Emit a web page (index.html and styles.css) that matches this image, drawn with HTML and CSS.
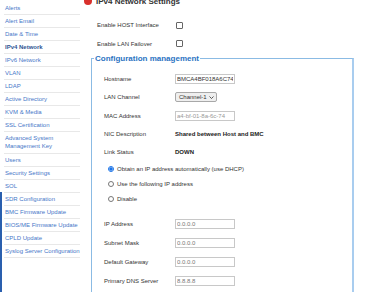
FILE: index.html
```html
<!DOCTYPE html>
<html lang="en">
<head>
  <meta charset="UTF-8" />
  <meta name="viewport" content="width=device-width, initial-scale=1.0"/>
  <title>IPv4 Network Settings</title>
  <link rel="stylesheet" href="styles.css">
</head>
<body>

<div class="page">
  <div class="sidebar">
    <div class="nav-item">Alerts</div>
    <div class="nav-item">Alert Email</div>
    <div class="nav-item">Date &amp; Time</div>
    <div class="nav-item active">IPv4 Network</div>
    <div class="nav-item">IPv6 Network</div>
    <div class="nav-item">VLAN</div>
    <div class="nav-item">LDAP</div>
    <div class="nav-item">Active Directory</div>
    <div class="nav-item">KVM &amp; Media</div>
    <div class="nav-item">SSL Certification</div>
    <div class="nav-item tall">Advanced System<br>Management Key</div>
    <div class="nav-item">Users</div>
    <div class="nav-item">Security Settings</div>
    <div class="nav-item">SOL</div>
    <div class="nav-item">SDR Configuration</div>
    <div class="nav-item">BMC Firmware Update</div>
    <div class="nav-item">BIOS/ME Firmware Update</div>
    <div class="nav-item">CPLD Update</div>
    <div class="nav-item">Syslog Server Configuration</div>
  </div>

  <div class="main">
    <div class="title">
      <span class="title-icon"></span>
      <span>IPv4 Network Settings</span>
    </div>

    <div class="switches">
      <div class="switch-row">
        <label>Enable HOST Interface</label>
        <input type="checkbox" class="check">
      </div>
      <div class="switch-row">
        <label>Enable LAN Failover</label>
        <input type="checkbox" class="check">
      </div>
    </div>

    <fieldset class="config">
      <legend>Configuration management</legend>

      <div class="form-row">
        <span class="label">Hostname</span>
        <input type="text" class="text-input" value="BMCA4BF018A6C74">
      </div>
      <div class="form-row">
        <span class="label">LAN Channel</span>
        <div class="select">
          <span>Channel-1</span>
          <svg width="5" height="3" viewBox="0 0 5 3"><path d="M0.5 0.5 L2.5 2.5 L4.5 0.5" fill="none" stroke="#333" stroke-width="0.8"/></svg>
        </div>
      </div>
      <div class="form-row">
        <span class="label">MAC Address</span>
        <input type="text" class="text-input" value="a4-bf-01-8a-6c-74" disabled>
      </div>
      <div class="form-row">
        <span class="label">NIC Description</span>
        <span class="value">Shared between Host and BMC</span>
      </div>
      <div class="form-row">
        <span class="label">Link Status</span>
        <span class="value">DOWN</span>
      </div>

      <div class="radio-row">
        <input type="radio" name="mode" class="radio" checked>
        <label>Obtain an IP address automatically (use DHCP)</label>
      </div>
      <div class="radio-row">
        <input type="radio" name="mode" class="radio">
        <label>Use the following IP address</label>
      </div>
      <div class="radio-row">
        <input type="radio" name="mode" class="radio">
        <label>Disable</label>
      </div>

      <div class="ip-rows">
        <div class="form-row">
          <span class="label">IP Address</span>
          <input type="text" class="text-input muted" value="0.0.0.0">
        </div>
        <div class="form-row">
          <span class="label">Subnet Mask</span>
          <input type="text" class="text-input muted" value="0.0.0.0">
        </div>
        <div class="form-row">
          <span class="label">Default Gateway</span>
          <input type="text" class="text-input muted" value="0.0.0.0">
        </div>
        <div class="form-row">
          <span class="label">Primary DNS Server</span>
          <input type="text" class="text-input muted" value="8.8.8.8">
        </div>
      </div>
    </fieldset>
  </div>
</div>

</body>
</html>
```

FILE: styles.css
```css
* { box-sizing: border-box; }
body {
  margin: 0;
  height: 292px;
  overflow: hidden;
  font-family: "Liberation Sans", Arial, sans-serif;
  font-size: 6px;
  color: #333;
  background: #fff linear-gradient(#2a5fae, #2a5fae) 0 192px / 2px 100% no-repeat;
}
.page { display: flex; }

.sidebar {
  flex: none;
  width: 76px;
  margin-left: 4px;
  padding-top: 2px;
}
.nav-item {
  padding: 2px 0 2px 1px;
  line-height: 8px;
  color: #4677c8;
  border-bottom: 1px solid #e8e8e8;
  white-space: nowrap;
}
.nav-item.tall { padding-bottom: 3px; }
.nav-item.active { font-weight: bold; color: #2f5593; }

.main { margin-left: 4px; }
.title {
  display: flex;
  align-items: center;
  gap: 4px;
  height: 10px;
  margin-top: -4px;
  font-size: 8px;
  font-weight: bold;
  color: #333;
}
.title-icon {
  width: 8px;
  height: 8px;
  border-radius: 50%;
  background: #d9302c;
}

.switches { margin-top: 10px; padding-left: 13px; }
.switch-row {
  display: flex;
  align-items: center;
  height: 18.5px;
}
.switch-row label { width: 79px; }
.check {
  appearance: none;
  margin: 0;
  width: 7px;
  height: 7px;
  border: 1px solid #666;
  border-radius: 1px;
  background: #fff;
}

.config {
  width: 263px;
  margin: 1px 0 0 7px;
  padding: 7px 0 40px 12px;
  border: 1px solid #8bbbe4;
  border-right: 2px solid #a9cdef;
  border-bottom: none;
}
.config legend {
  margin-left: -10px;
  padding: 0 1px;
  line-height: 9px;
  font-size: 8px;
  font-weight: bold;
  color: #2b73c2;
}

.form-row {
  display: flex;
  align-items: center;
  height: 18.25px;
}
.form-row .label { width: 71px; }
.text-input {
  width: 60px;
  height: 10px;
  margin: 0;
  padding: 0 1px;
  border: 1px solid #c8c8c8;
  font: inherit;
  font-size: 6px;
  color: #333;
  background: #fff;
}
.text-input:disabled { color: #999; }
.text-input.muted { color: #777; }
.value { font-weight: bold; color: #222; }

.select {
  display: inline-flex;
  align-items: center;
  justify-content: space-between;
  width: 42px;
  height: 10px;
  padding: 0 2px 0 3px;
  border: 1px solid #a8a8a8;
  border-radius: 2px;
  background: #efefef;
}

.radio-row {
  display: flex;
  align-items: center;
  gap: 3px;
  height: 15px;
  padding-left: 4px;
}
.radio {
  appearance: none;
  margin: 0;
  width: 6px;
  height: 6px;
  border: 1px solid #777;
  border-radius: 50%;
  background: #fff;
}
.radio:checked {
  border-color: #1a73e8;
  background: radial-gradient(circle, #1a73e8 0 1.4px, #fff 1.9px);
}

.ip-rows { margin-top: 8px; }
.ip-rows .form-row { height: 19px; }
```
